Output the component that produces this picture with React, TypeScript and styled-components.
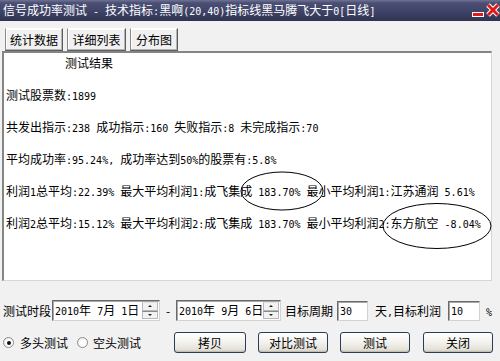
import React from "react";
import styled, { createGlobalStyle } from "styled-components";

const GlobalStyle = createGlobalStyle`
  html, body {
    margin: 0;
    padding: 0;
    background: #f1f1f1;
  }
  body {
    font-family: "Noto Sans CJK SC", "DejaVu Sans", sans-serif;
    font-size: 12px;
    color: #000;
  }
`;

const Window = styled.div`
  width: 500px;
  height: 361px;
  display: flex;
  flex-direction: column;
  background: #f1f1f1;
  overflow: hidden;
`;

const TitleBar = styled.div`
  height: 21px;
  display: flex;
  align-items: flex-start;
  padding-left: 3px;
  background: linear-gradient(#6e7294 0, #4a4f73 3px, #3e4368 55%, #2f334f 100%);
  color: #fff;
  white-space: nowrap;
`;

const TitleText = styled.div`
  flex: 1;
  line-height: 20px;
`;

const Ascii = styled.span`
  font-family: "DejaVu Sans Mono", monospace;
  font-size: 10px;
`;

// half-width latin, as in the bitmap font of the original
const T = ({ children }: { children: string }) => {
  const parts = children.split(/([\x20-\x7e]+)/);
  return (
    <>
      {parts.map((p, i) => (i % 2 ? <Ascii key={i}>{p}</Ascii> : p))}
    </>
  );
};

const Tabs = styled.div`
  display: flex;
  gap: 4px;
  padding: 7px 0 0 5px;
`;

const Tab = styled.div<{ $w: number }>`
  width: ${(p) => p.$w}px;
  height: 23px;
  box-sizing: border-box;
  display: flex;
  align-items: center;
  justify-content: center;
  background: #f0f0f0;
  border: 1px solid;
  border-color: #ffffff #5e5e5e #5e5e5e #8a8a8a;
  box-shadow: inset -1px -1px 0 #b4b4b4, inset 1px 1px 0 #ffffff;
`;

const Panel = styled.div`
  position: relative;
  margin: 0 0 0 2px;
  width: 490px;
  height: 230px;
  box-sizing: border-box;
  background: #fff;
  border-style: solid;
  border-width: 2px 1px 1px 2px;
  border-color: #858585 #d6d6d6 #d6d6d6 #858585;
  padding: 2px 0 0 2px;
`;

const PanelTitle = styled.div`
  line-height: 16px;
  margin-left: 59px;
  margin-bottom: 8px;
`;

const Line = styled.div`
  line-height: 32px;
  height: 32px;
  white-space: nowrap;
`;

const Marks = styled.svg`
  position: absolute;
  left: 0;
  top: 0;
  overflow: visible;
  pointer-events: none;
`;

const Controls = styled.div`
  display: flex;
  flex-direction: column;
  padding-top: 19px;
`;

const Row = styled.div<{ $top?: number }>`
  display: flex;
  align-items: center;
  height: 21px;
  margin-top: ${(p) => p.$top ?? 0}px;
  white-space: nowrap;
`;

const Label = styled.span<{ $ml?: number }>`
  margin-left: ${(p) => p.$ml ?? 0}px;
`;

const Field = styled.div<{ $w: number; $ml?: number; $h?: number }>`
  width: ${(p) => p.$w}px;
  height: ${(p) => p.$h ?? 21}px;
  margin-left: ${(p) => p.$ml ?? 0}px;
  box-sizing: border-box;
  display: flex;
  align-items: center;
  background: #fff;
  border: 1px solid;
  border-color: #6a6a6a #d2d2d2 #d2d2d2 #6a6a6a;
  box-shadow: inset 1px 1px 0 #a8a8a8;
  padding-left: 2px;
`;

const FieldText = styled.span`
  flex: 1;
  line-height: 18px;
`;

const Spin = styled.div`
  width: 16px;
  height: 17px;
  display: flex;
  flex-direction: column;
  margin-right: 1px;
`;

const SpinHalf = styled.div<{ $down?: boolean }>`
  flex: 1;
  display: flex;
  align-items: center;
  justify-content: center;
  background: #f2f2f2;
  border: 1px solid #b8b8b8;
  border-top-color: ${(p) => (p.$down ? "#8a8a8a" : "#e0e0e0")};
  &::after {
    content: "";
    width: 0;
    height: 0;
    border-left: 2px solid transparent;
    border-right: 2px solid transparent;
    ${(p) =>
      p.$down ? "border-top: 2px solid #222;" : "border-bottom: 2px solid #222;"}
  }
`;

const Dash = styled.span`
  width: 16px;
  text-align: center;
`;

const Radio = styled.span<{ $checked?: boolean; $ml?: number }>`
  width: 11px;
  height: 11px;
  margin-left: ${(p) => p.$ml ?? 0}px;
  box-sizing: border-box;
  border-radius: 50%;
  border: 1px solid #8c8c8c;
  background: radial-gradient(circle at 60% 60%, #ffffff 40%, #dcdcdc 100%);
  display: flex;
  align-items: center;
  justify-content: center;
  &::after {
    content: "";
    width: 4px;
    height: 4px;
    border-radius: 50%;
    background: ${(p) => (p.$checked ? "#111" : "transparent")};
  }
`;

const Button = styled.button<{ $w: number; $ml: number }>`
  width: ${(p) => p.$w}px;
  height: 21px;
  margin-left: ${(p) => p.$ml}px;
  padding: 0;
  font-family: inherit;
  font-size: 12px;
  color: #000;
  border: 1px solid #2c3d58;
  border-radius: 3px;
  background: linear-gradient(#ffffff 0%, #f4f3ef 45%, #e4e2db 85%, #cdc9bd 100%);
  box-shadow: inset 0 -1px 0 #c2bfb2;
`;

const App: React.FC = () => {
  return (
    <Window>
      <GlobalStyle />
      <TitleBar>
        <TitleText>
          <T>{"信号成功率测试 - 技术指标:黑啊(20,40)指标线黑马腾飞大于0[日线]"}</T>
        </TitleText>
        <svg width="30" height="18" viewBox="0 0 30 18">
          <rect x="2.5" y="12.5" width="11" height="4" fill="#e01a1a" stroke="#fff" strokeWidth="1" />
          <path d="M18 5 L28 15 M28 5 L18 15" stroke="#fff" strokeWidth="5" />
          <path d="M18 5 L28 15 M28 5 L18 15" stroke="#e01a1a" strokeWidth="3" />
        </svg>
      </TitleBar>

      <Tabs>
        <Tab $w={58}>统计数据</Tab>
        <Tab $w={59}>详细列表</Tab>
        <Tab $w={48}>分布图</Tab>
      </Tabs>

      <Panel>
        <PanelTitle>测试结果</PanelTitle>
        <Line>
          <T>{"测试股票数:1899"}</T>
        </Line>
        <Line>
          <T>{"共发出指示:238 成功指示:160 失败指示:8 未完成指示:70"}</T>
        </Line>
        <Line>
          <T>{"平均成功率:95.24%, 成功率达到50%的股票有:5.8%"}</T>
        </Line>
        <Line>
          <T>{"利润1总平均:22.39% 最大平均利润1:成飞集成 183.70% 最小平均利润1:江苏通润 5.61%"}</T>
        </Line>
        <Line>
          <T>{"利润2总平均:15.12% 最大平均利润2:成飞集成 183.70% 最小平均利润2:东方航空 -8.04%"}</T>
        </Line>
        <Marks width="488" height="228">
          <ellipse cx="278" cy="138" rx="41" ry="19" fill="none" stroke="#000" strokeWidth="1" />
          <ellipse cx="433" cy="173" rx="54" ry="22.5" fill="none" stroke="#000" strokeWidth="1" />
        </Marks>
      </Panel>

      <Controls>
        <Row>
          <Label $ml={3}>测试时段</Label>
          <Field $w={108} $ml={1}>
            <FieldText>
              <T>{"2010年 7月 1日"}</T>
            </FieldText>
            <Spin>
              <SpinHalf />
              <SpinHalf $down />
            </Spin>
          </Field>
          <Dash>-</Dash>
          <Field $w={105}>
            <FieldText>
              <T>{"2010年 9月 6日"}</T>
            </FieldText>
            <Spin>
              <SpinHalf />
              <SpinHalf $down />
            </Spin>
          </Field>
          <Label $ml={4}>目标周期</Label>
          <Field $w={31} $ml={4} $h={20}>
            <FieldText>
              <T>{"30"}</T>
            </FieldText>
          </Field>
          <Label $ml={7}>
            <T>{"天,目标利润"}</T>
          </Label>
          <Field $w={32} $ml={7} $h={20}>
            <FieldText>
              <T>{"10"}</T>
            </FieldText>
          </Field>
          <Label $ml={6}>
            <T>{"%"}</T>
          </Label>
        </Row>
        <Row $top={11}>
          <Radio $checked $ml={3} />
          <Label $ml={6}>多头测试</Label>
          <Radio $ml={9} />
          <Label $ml={5}>空头测试</Label>
          <Button $w={72} $ml={33}>拷贝</Button>
          <Button $w={70} $ml={12}>对比测试</Button>
          <Button $w={70} $ml={12}>测试</Button>
          <Button $w={70} $ml={13}>关闭</Button>
        </Row>
      </Controls>
    </Window>
  );
};

export default App;
